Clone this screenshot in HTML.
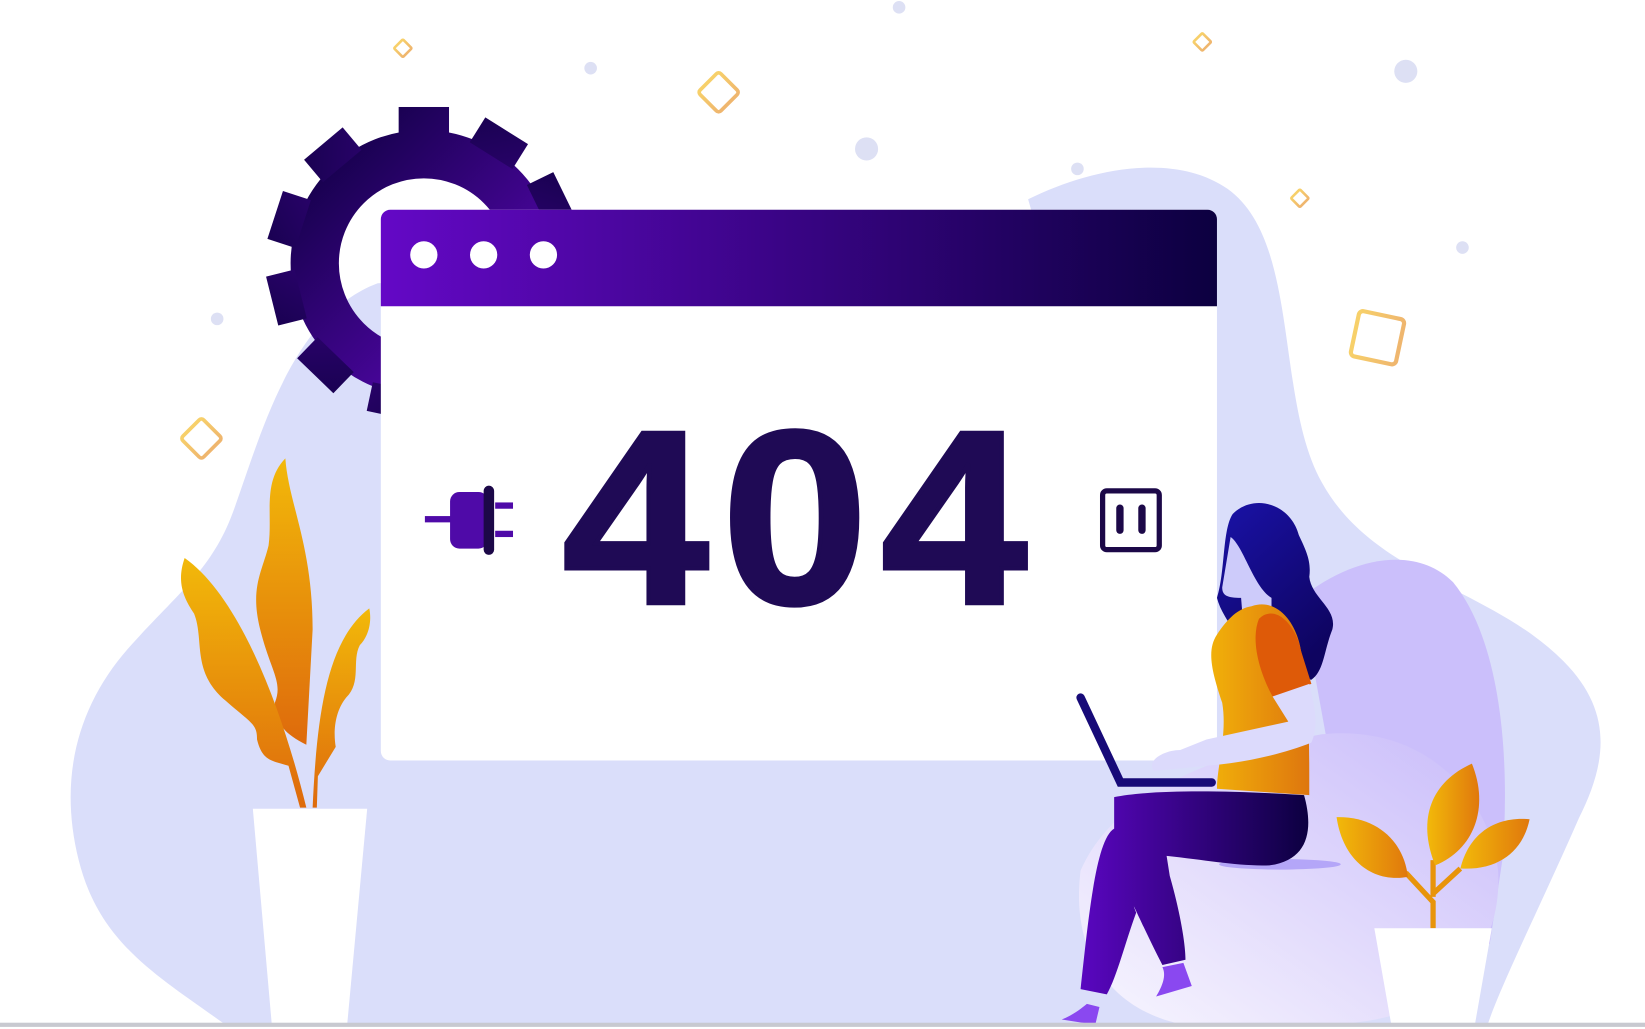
<!DOCTYPE html>
<html><head><meta charset="utf-8"><style>
html,body{margin:0;padding:0;background:#fff;overflow:hidden}
svg{display:block}
</style></head><body>
<svg width="1645" height="1029" viewBox="0 0 1568 981" preserveAspectRatio="none" xmlns="http://www.w3.org/2000/svg">
<defs>
<linearGradient id="hdr" x1="0" x2="1"><stop offset="0" stop-color="#6408c6"/><stop offset="1" stop-color="#0c0040"/></linearGradient>
<linearGradient id="gear" gradientUnits="userSpaceOnUse" x1="-120" y1="-120" x2="120" y2="120"><stop offset="0" stop-color="#0e0040"/><stop offset="1" stop-color="#6308c4"/></linearGradient>
<linearGradient id="leaf" x1="0" y1="0" x2="0" y2="1"><stop offset="0" stop-color="#f2b90a"/><stop offset="1" stop-color="#de6a0c"/></linearGradient>
<linearGradient id="leafh" x1="0" x2="1"><stop offset="0" stop-color="#f2b90a"/><stop offset="1" stop-color="#e0780c"/></linearGradient>
<linearGradient id="pants" x1="0" x2="1"><stop offset="0" stop-color="#5a06c0"/><stop offset="1" stop-color="#0c0040"/></linearGradient>
<linearGradient id="hair" x1="0" y1="0" x2="0.6" y2="1"><stop offset="0" stop-color="#1a12a8"/><stop offset="1" stop-color="#0e0460"/></linearGradient>
<linearGradient id="shirt" x1="0" x2="1"><stop offset="0" stop-color="#f1b00a"/><stop offset="1" stop-color="#de760e"/></linearGradient>
<linearGradient id="seat" x1="0" y1="1" x2="1" y2="0"><stop offset="0" stop-color="#f8f6fe"/><stop offset="1" stop-color="#c9bcfa"/></linearGradient>
<linearGradient id="dia" x1="0" x2="1"><stop offset="0" stop-color="#f7d06a"/><stop offset="1" stop-color="#efb66e"/></linearGradient>
</defs>

<path d="M215,977 C150,930 95,900 75,820 C55,740 75,670 125,615 C175,560 205,540 225,480 C250,410 280,300 360,270 L1000,260 L980,190 C1040,160 1120,145 1170,180 C1240,230 1215,380 1260,460 C1310,550 1420,560 1490,630 C1540,680 1530,730 1505,780 C1470,860 1430,940 1418,977 Z" fill="#dadefa"/>
<path d="M1240,570 C1290,530 1350,520 1385,555 C1430,610 1440,720 1432,820 L1420,900 L1300,900 Z" fill="#cbbffb"/>
<path d="M1030,830 C1060,760 1150,720 1260,700 C1360,690 1420,760 1428,830 C1432,900 1390,965 1290,975 L1120,975 C1060,960 1020,910 1030,830 Z" fill="url(#seat)"/>

<g transform="translate(404,251)" fill="url(#gear)">
<circle r="104" fill="none" stroke="url(#gear)" stroke-width="46"/>
<g id="t"><rect x="-24" y="-149" width="48" height="28"/></g>
<use href="#t" transform="rotate(32)"/><use href="#t" transform="rotate(64)"/><use href="#t" transform="rotate(96)"/>
<use href="#t" transform="rotate(128)"/><use href="#t" transform="rotate(160)"/><use href="#t" transform="rotate(192)"/>
<use href="#t" transform="rotate(224)"/><use href="#t" transform="rotate(256)"/><use href="#t" transform="rotate(288)"/><use href="#t" transform="rotate(320)"/>
</g>

<g fill="none" stroke="url(#dia)" stroke-width="3.5" stroke-linejoin="round">
<rect x="-14" y="-14" width="28" height="28" rx="3" transform="translate(685,88) rotate(45)"/>
<rect x="-14" y="-14" width="28" height="28" rx="3" transform="translate(192,418) rotate(45)"/>
<rect x="-6" y="-6" width="12" height="12" rx="1" transform="translate(384,46) rotate(45)" stroke-width="2.5"/>
<rect x="-6" y="-6" width="12" height="12" rx="1" transform="translate(1146,40) rotate(45)" stroke-width="2.5"/>
<rect x="-6" y="-6" width="12" height="12" rx="1" transform="translate(1239,189) rotate(45)" stroke-width="2.5"/>
<rect x="-22" y="-22" width="44" height="44" rx="4" transform="translate(1313,322) rotate(12)" stroke-width="4"/>
</g>
<g fill="#dde0f4">
<circle cx="857" cy="7" r="6"/><circle cx="563" cy="65" r="6"/><circle cx="826" cy="142" r="11"/>
<circle cx="1027" cy="161" r="6"/><circle cx="1340" cy="68" r="11"/><circle cx="1394" cy="236" r="6"/><circle cx="207" cy="304" r="6"/>
</g>

<rect x="363" y="200" width="797" height="525" rx="9" fill="#fff"/>
<path d="M372,200 H1151 a9,9 0 0 1 9,9 V292 H363 V209 a9,9 0 0 1 9,-9 Z" fill="url(#hdr)"/>
<g fill="#fff"><circle cx="404" cy="243" r="13"/><circle cx="461" cy="243" r="13"/><circle cx="518" cy="243" r="13"/></g>
<text transform="translate(764,575) scale(1.06,1)" text-anchor="middle" font-family="Liberation Sans, sans-serif" font-weight="bold" font-size="236" letter-spacing="12" fill="#1f0a55" stroke="#1f0a55" stroke-width="4">404</text>

<g fill="#4f0aa8">
<rect x="405" y="492" width="28" height="6"/>
<rect x="429" y="469" width="36" height="54" rx="9"/>
<rect x="472" y="479" width="17" height="6"/><rect x="472" y="506" width="17" height="6"/>
</g>
<rect x="461" y="463" width="10" height="66" rx="5" fill="#1c0848"/>
<rect x="1051" y="468" width="54" height="56" rx="4" fill="none" stroke="#1c0848" stroke-width="5"/>
<rect x="1064" y="481" width="7" height="28" rx="3.5" fill="#1c0848"/>
<rect x="1085" y="481" width="7" height="28" rx="3.5" fill="#1c0848"/>

<path d="M272,437 C250,460 260,490 256,520 C250,545 238,560 248,600 C258,640 270,650 262,670 C262,690 272,700 292,710 L298,600 C298,520 275,480 272,437 Z" fill="url(#leaf)"/>
<path d="M176,532 C168,555 175,570 185,585 C195,610 182,640 215,668 C240,690 245,690 245,705 C250,725 258,725 275,730 L286,770 L292,770 C270,680 230,570 176,532 Z" fill="url(#leaf)"/>
<path d="M352,580 C355,595 350,608 343,615 C335,630 345,650 330,665 C318,680 318,700 320,712 L303,740 L302,770 L298,770 C302,680 312,610 352,580 Z" fill="url(#leaf)"/>
<path d="M241,771 H350 L331,976 H259 Z" fill="#fff"/>

<path d="M1366,885 V860 L1340,832 M1366,855 V820 M1366,852 L1392,828" stroke="#e8940a" stroke-width="5" fill="none"/>
<path d="M1274,779 C1310,778 1338,800 1342,836 C1308,842 1280,820 1274,779 Z" fill="url(#leafh)"/>
<path d="M1403,728 C1420,770 1405,810 1368,825 C1350,780 1365,745 1403,728 Z" fill="url(#leafh)"/>
<path d="M1458,781 C1452,810 1430,830 1392,828 C1400,795 1425,778 1458,781 Z" fill="url(#leafh)"/>
<path d="M1310,885 H1422 L1406,976 H1326 Z" fill="#fff"/>

<ellipse cx="1220" cy="824" rx="58" ry="5" fill="#b4a6f8"/>
<path d="M1175,490 C1195,470 1230,480 1238,510 C1245,525 1250,535 1248,550 C1250,570 1275,580 1270,600 C1262,620 1262,640 1250,648 L1200,640 C1185,610 1165,590 1160,570 C1168,545 1165,505 1175,490 Z" fill="url(#hair)"/>
<path d="M1173,512 C1185,520 1195,560 1212,570 L1212,595 L1185,595 L1183,570 C1170,570 1165,568 1165,560 Z" fill="#cdcbfa"/>
<path d="M1193,578 C1215,570 1235,590 1240,620 C1248,660 1248,700 1248,758 L1160,752 C1160,730 1170,700 1165,670 C1155,640 1150,620 1160,605 C1170,590 1180,580 1193,578 Z" fill="url(#shirt)"/>
<path d="M1200,590 C1215,575 1235,595 1240,620 L1250,652 L1213,664 C1200,640 1192,610 1200,590 Z" fill="#de5a08"/>
<path d="M1213,664 L1248,652 C1252,670 1258,690 1250,708 C1220,720 1180,728 1150,730 L1100,735 C1092,725 1110,715 1125,715 L1150,705 L1228,688 Z" fill="#dcdafc"/>
<path d="M1030,665 L1068,746 L1155,746" stroke="#170a78" stroke-width="8" stroke-linecap="round" fill="none"/>
<path d="M1062,760 C1100,752 1180,754 1243,758 C1252,790 1248,820 1210,825 C1180,826 1150,820 1112,816 L1115,835 C1125,870 1130,900 1130,915 L1108,920 C1090,885 1075,850 1083,870 C1072,900 1065,930 1055,948 L1030,943 C1038,870 1045,800 1062,790 Z" fill="url(#pants)"/>
<path d="M1108,922 L1128,918 L1136,940 L1102,950 C1108,940 1112,930 1108,922 Z" fill="#8a48f0"/>
<path d="M1036,957 L1048,960 L1044,977 L1012,972 C1022,968 1030,962 1036,957 Z" fill="#8a48f0"/>

<rect x="0" y="975" width="1568" height="4" fill="#c8c9d0"/>
</svg>
</body></html>
